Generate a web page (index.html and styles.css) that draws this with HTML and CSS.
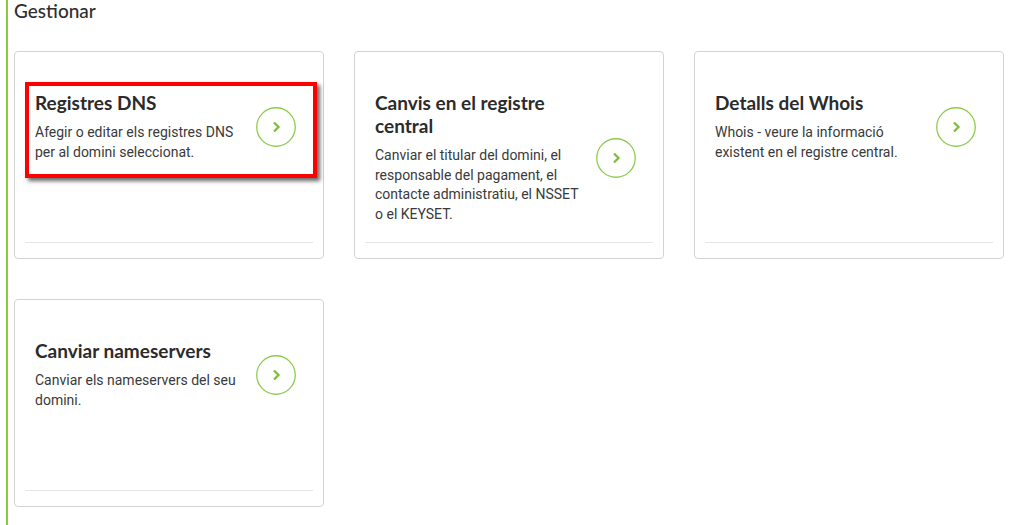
FILE: index.html
```html
<!DOCTYPE html>
<html lang="ca">
<head>
<meta charset="utf-8">
<title>Gestionar</title>
<link rel="stylesheet" href="styles.css">
</head>
<body>
<div class="page">
  <h2 class="section-title">Gestionar</h2>
  <div class="grid">
    <div class="card card-marked">
      <div class="card-body">
        <div class="card-text">
          <h3 class="card-title">Registres DNS</h3>
          <p class="card-desc">Afegir o editar els registres DNS per al domini seleccionat.</p>
        </div>
        <a class="go" href="#"><svg viewBox="0 0 40 40" width="40" height="40"><circle cx="20" cy="20" r="19.25" fill="none" stroke="#8dcc4e" stroke-width="1.3"/><path d="M18 15.5 L22.5 20 L18 24.5" fill="none" stroke="#7fbf3a" stroke-width="2.3"/></svg></a>
      </div>
      <div class="card-rule"></div>
      <div class="highlight"></div>
    </div>
    <div class="card">
      <div class="card-body">
        <div class="card-text">
          <h3 class="card-title">Canvis en el registre central</h3>
          <p class="card-desc">Canviar el titular del domini, el responsable del pagament, el contacte administratiu, el NSSET o el KEYSET.</p>
        </div>
        <a class="go" href="#"><svg viewBox="0 0 40 40" width="40" height="40"><circle cx="20" cy="20" r="19.25" fill="none" stroke="#8dcc4e" stroke-width="1.3"/><path d="M18 15.5 L22.5 20 L18 24.5" fill="none" stroke="#7fbf3a" stroke-width="2.3"/></svg></a>
      </div>
      <div class="card-rule"></div>
    </div>
    <div class="card">
      <div class="card-body">
        <div class="card-text">
          <h3 class="card-title">Detalls del Whois</h3>
          <p class="card-desc">Whois - veure la informació existent en el registre central.</p>
        </div>
        <a class="go" href="#"><svg viewBox="0 0 40 40" width="40" height="40"><circle cx="20" cy="20" r="19.25" fill="none" stroke="#8dcc4e" stroke-width="1.3"/><path d="M18 15.5 L22.5 20 L18 24.5" fill="none" stroke="#7fbf3a" stroke-width="2.3"/></svg></a>
      </div>
      <div class="card-rule"></div>
    </div>
    <div class="card">
      <div class="card-body">
        <div class="card-text">
          <h3 class="card-title">Canviar nameservers</h3>
          <p class="card-desc">Canviar els nameservers del seu domini.</p>
        </div>
        <a class="go" href="#"><svg viewBox="0 0 40 40" width="40" height="40"><circle cx="20" cy="20" r="19.25" fill="none" stroke="#8dcc4e" stroke-width="1.3"/><path d="M18 15.5 L22.5 20 L18 24.5" fill="none" stroke="#7fbf3a" stroke-width="2.3"/></svg></a>
      </div>
      <div class="card-rule"></div>
    </div>
  </div>
</div>
</body>
</html>
```

FILE: styles.css
```css
html, body {
  margin: 0;
  padding: 0;
  background: #fff;
}
body {
  font-family: Roboto, "Liberation Sans", sans-serif;
  color: #333;
}
.page {
  margin-left: 6px;
  border-left: 2px solid #8dc63f;
  padding-left: 6px;
  min-height: 525px;
  box-sizing: border-box;
}
.section-title {
  margin: 0;
  padding-top: 0;
  font-family: Lato, "Open Sans", sans-serif;
  font-weight: 500;
  font-size: 19px;
  line-height: 22px;
  color: #2e2e2e;
}
.grid {
  display: grid;
  grid-template-columns: repeat(3, 310px);
  column-gap: 30px;
  row-gap: 40px;
  margin-top: 29px;
}
.card {
  position: relative;
  height: 208px;
  box-sizing: border-box;
  border: 1px solid #d3d3d6;
  border-radius: 4px;
  display: flex;
  flex-direction: column;
}
.card-body {
  display: flex;
  align-items: center;
  padding: 39px 27px 0 20px;
  gap: 10px;
}
.card-text {
  width: 211px;
}
.card-title {
  margin: 0 0 9px;
  font-family: Lato, "Open Sans", sans-serif;
  font-weight: 700;
  font-size: 19px;
  line-height: 23px;
  color: #2b2b2b;
}
.card-desc {
  margin: 0;
  font-size: 14px;
  line-height: 19.5px;
  color: #3a3a3a;
}
.go {
  display: block;
  width: 40px;
  height: 40px;
  flex: none;
}
.go svg {
  display: block;
}
.card-rule {
  margin: auto 10px 15px;
  border-top: 1px solid #e6e6e6;
}
.highlight {
  position: absolute;
  left: 10px;
  top: 30px;
  width: 292px;
  height: 96px;
  box-sizing: border-box;
  border: 4px solid #ff0000;
  box-shadow: 3px 3px 4px rgba(0, 0, 0, 0.6);
  pointer-events: none;
}
```
